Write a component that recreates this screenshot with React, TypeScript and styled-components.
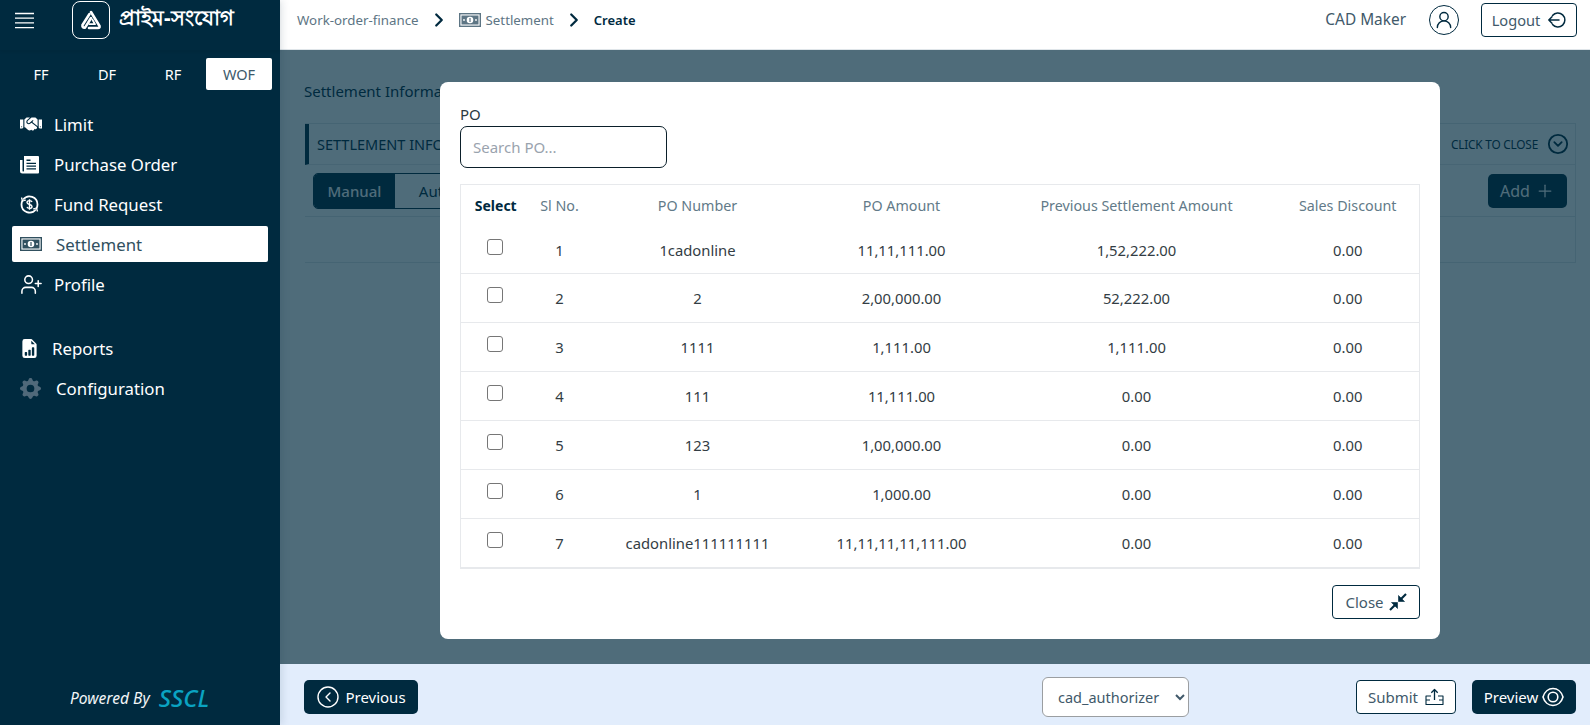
import React from "react";
import styled, { createGlobalStyle } from "styled-components";
import { ChevronRight, Plus, UserRound, UserPlus, CircleChevronLeft, CircleChevronDown } from "lucide-react";
import { BsFileEarmarkBarGraphFill, BsGearFill } from "react-icons/bs";
import { FaHandshake } from "react-icons/fa";

const NAVY = "#002a3f";
const FONT = `"Noto Sans", "Open Sans", "Noto Sans CJK SC", sans-serif`;

const Global = createGlobalStyle`
  html, body { margin: 0; padding: 0; height: 100%; overflow: hidden; }
  body { font-family: ${FONT}; color: ${NAVY}; background: #fff; }
  * { box-sizing: border-box; }
`;

const Shell = styled.div`
  display: grid;
  grid-template-columns: 280px 1fr;
  height: 725px;
  width: 1590px;
`;

/* ---------- sidebar ---------- */
const Sidebar = styled.aside`
  background: ${NAVY};
  color: #fff;
  display: flex;
  flex-direction: column;
  box-shadow: 2px 0 8px rgba(0, 42, 63, 0.12);
  position: relative;
  z-index: 3;
`;
const Brand = styled.div`
  height: 50px;
  display: flex;
  align-items: center;
  padding: 0 0 10px 15px;
  box-shadow: 0 2px 3px rgba(0, 0, 0, 0.06);
`;
const Burger = styled.svg`
  width: 19px;
  height: 17px;
  margin-right: 38px;
  flex: none;
`;
const LogoBox = styled.div`
  width: 38px;
  height: 38px;
  border: 1.5px solid #fff;
  border-radius: 8px;
  display: flex;
  align-items: center;
  justify-content: center;
  margin-right: 9px;
`;
const BrandName = styled.div`
  font-size: 20.6px;
  font-weight: 700;
  white-space: nowrap;
  letter-spacing: 0;
`;
const ProductTabs = styled.div`
  display: grid;
  grid-template-columns: repeat(4, 66px);
  margin: 8px 0 0 8px;
`;
const ProductTab = styled.div<{ $active?: boolean }>`
  height: 32px;
  display: flex;
  align-items: center;
  justify-content: center;
  font-size: 14.5px;
  border-radius: 2px;
  background: ${(p) => (p.$active ? "#fff" : "transparent")};
  color: ${(p) => (p.$active ? "#3d5a6b" : "#fff")};
`;
const Menu = styled.nav`
  display: flex;
  flex-direction: column;
  margin-top: 16px;
`;
const MenuItem = styled.div<{ $active?: boolean; $gap?: number }>`
  height: 36px;
  margin: 0 12px 4px;
  padding: 0 0 0 8px;
  display: flex;
  align-items: center;
  font-size: 16.8px;
  border-radius: 2px;
  background: ${(p) => (p.$active ? "#fff" : "transparent")};
  color: ${(p) => (p.$active ? "#31505f" : "#fff")};
  margin-top: ${(p) => p.$gap ?? 0}px;
`;
const MenuIcon = styled.span<{ $w?: number; $tint?: string }>`
  width: ${(p) => p.$w ?? 34}px;
  flex: none;
  display: flex;
  align-items: center;
  color: ${(p) => p.$tint ?? "inherit"};
`;
const Powered = styled.div`
  margin-top: auto;
  height: 61px;
  display: flex;
  align-items: center;
  padding: 6px 0 0 70px;
  gap: 9px;
  font-style: italic;
`;
const PoweredText = styled.span`
  font-size: 15.6px;
  color: #f2f5f7;
`;
const PoweredBrand = styled.span`
  font-size: 24px;
  font-weight: 500;
  color: #0aa3c2;
`;

/* ---------- main ---------- */
const Main = styled.main`
  display: flex;
  flex-direction: column;
  min-width: 0;
`;
const Header = styled.header`
  height: 50px;
  flex: none;
  display: flex;
  align-items: center;
  padding: 0 13px 10px 17px;
  background: #fff;
  border-bottom: 1px solid #dfe5e9;
`;
const Crumb = styled.span<{ $strong?: boolean }>`
  font-size: ${(p) => (p.$strong ? 13 : 13.3)}px;
  color: ${(p) => (p.$strong ? NAVY : "#5d7584")};
  font-weight: ${(p) => (p.$strong ? 600 : 400)};
`;
const Chevron = styled(ChevronRight)`
  width: 22px;
  height: 22px;
  color: ${NAVY};
  stroke-width: 2.5;
  margin: 0 9px 0 9px;
  flex: none;
`;
const CrumbBill = styled.span`
  display: flex;
  margin-right: 5px;
  color: #5d7584;
`;
const UserName = styled.span`
  margin-left: auto;
  font-size: 15.4px;
  color: #41596a;
`;
const Avatar = styled.span`
  width: 30px;
  height: 30px;
  border: 1.5px solid ${NAVY};
  border-radius: 50%;
  display: flex;
  align-items: center;
  justify-content: center;
  margin: 0 22px 0 23px;
`;
const OutlineButton = styled.button`
  height: 34px;
  display: inline-flex;
  align-items: center;
  justify-content: center;
  gap: 7px;
  background: #fff;
  color: #41596a;
  border: 1px solid ${NAVY};
  border-radius: 4px;
  font-family: ${FONT};
  font-size: 15px;
  padding: 0;
`;
const LogoutButton = styled(OutlineButton)`
  width: 96px;
  font-size: 14.6px;
`;
const CloseButton = styled(OutlineButton)`
  width: 88px;
  gap: 5px;
`;
const SubmitButton = styled(OutlineButton)`
  width: 100px;
  margin-right: 16px;
`;
const SolidButton = styled.button`
  height: 34px;
  display: inline-flex;
  align-items: center;
  justify-content: center;
  background: ${NAVY};
  color: #fff;
  border: 0;
  border-radius: 5px;
  font-family: ${FONT};
  font-size: 15px;
  padding: 0;
`;
const PreviousButton = styled(SolidButton)`
  width: 114px;
  gap: 5px;
`;
const PreviewButton = styled(SolidButton)`
  width: 104px;
  gap: 4px;
`;

const Content = styled.section`
  flex: 1;
  position: relative;
  background: #fff;
  padding: 30px 14px 0 24px;
  min-height: 0;
  overflow: hidden;
`;
const PageTitle = styled.div`
  font-size: 15px;
  line-height: 22px;
  color: ${NAVY};
  margin-bottom: 21px;
`;
const Card = styled.div`
  margin-left: 1px;
  border: 1px solid #dfe4e8;
  border-left: 0;
  height: 140px;
  display: flex;
  flex-direction: column;
`;
const CardHeader = styled.div`
  height: 41px;
  border-left: 4px solid ${NAVY};
  border-bottom: 1px solid #e4e8eb;
  display: flex;
  align-items: center;
  justify-content: space-between;
  padding: 0 6px 0 8px;
  font-size: 14.5px;
  color: ${NAVY};
  flex: none;
`;
const CardToggle = styled.div`
  display: flex;
  align-items: center;
  gap: 9px;
  font-size: 11.8px;
  letter-spacing: -0.2px;
`;
const CardBar = styled.div`
  height: 52px;
  flex: none;
  display: flex;
  align-items: center;
  justify-content: space-between;
  padding: 0 8px;
  border-bottom: 1px solid #dfe4e8;
`;
const Segments = styled.div`
  display: flex;
  height: 36px;
  width: 180px;
  border: 1px solid ${NAVY};
  border-radius: 5px;
  overflow: hidden;
`;
const Segment = styled.div<{ $on?: boolean }>`
  width: 81px;
  display: flex;
  align-items: center;
  justify-content: center;
  font-size: 15px;
  font-weight: ${(p) => (p.$on ? 500 : 400)};
  background: ${(p) => (p.$on ? NAVY : "transparent")};
  color: ${(p) => (p.$on ? "#fff" : NAVY)};
`;
const AddButton = styled(SolidButton)`
  width: 79px;
  gap: 5px;
  font-size: 16px;
`;

const Backdrop = styled.div`
  position: absolute;
  inset: 0;
  background: rgba(0, 42, 63, 0.69);
  display: flex;
  justify-content: center;
  padding: 32px 0 0 10px;
`;
const Modal = styled.div`
  width: 1000px;
  height: 557px;
  background: #fff;
  border-radius: 8px;
  padding: 21px 20px 20px;
  display: flex;
  flex-direction: column;
`;
const FieldLabel = styled.label`
  display: block;
  font-size: 15px;
  line-height: 23px;
  color: #2b3a42;
`;
const SearchInput = styled.input`
  width: 207px;
  height: 42px;
  border: 1px solid #0b1f2a;
  border-radius: 7px;
  padding: 0 12px;
  font-family: ${FONT};
  font-size: 15px;
  outline: none;
  margin-bottom: 16px;
  flex: none;
  &::placeholder { color: #9aa3ae; }
`;
const Table = styled.table`
  width: 959px;
  table-layout: fixed;
  border-collapse: collapse;
  border: 1px solid #e7e9ec;
  border-bottom-width: 2px;
`;
const Col = styled.col<{ $w: number }>`
  width: ${(p) => p.$w}px;
`;
const Th = styled.th<{ $strong?: boolean }>`
  height: 43px;
  padding: 0 0 2px;
  font-size: ${(p) => (p.$strong ? 14 : 14.3)}px;
  text-align: center;
  font-weight: ${(p) => (p.$strong ? 700 : 400)};
  color: ${(p) => (p.$strong ? NAVY : "#627a88")};
  vertical-align: middle;
`;
const Tr = styled.tr`
  height: 49px;
  border-bottom: 1px solid #e7e9ec;
  &:first-child { height: 46px; }
  &:last-child { border-bottom: 0; }
`;
const Td = styled.td`
  padding: 0;
  text-align: center;
  font-size: 14.8px;
  color: #333d44;
`;
const Check = styled.input`
  appearance: none;
  width: 16px;
  height: 16px;
  border: 1px solid #767676;
  border-radius: 3px;
  background: #fff;
  margin: 0 0 6px 26px;
  display: block;
`;
const ModalFoot = styled.div`
  display: flex;
  justify-content: flex-end;
  margin-top: 16px;
`;

const Footer = styled.footer`
  height: 61px;
  flex: none;
  background: #e2edfc;
  display: flex;
  align-items: center;
  padding: 4px 14px 0 24px;
  position: relative;
  z-index: 2;
`;
const AssignSelect = styled.select`
  width: 147px;
  height: 40px;
  margin-left: auto;
  margin-right: 167px;
  background: #fff;
  border: 1px solid #9b9ea1;
  border-radius: 6px;
  padding: 0 8px 0 11px;
  color: #41596a;
  font-family: ${FONT};
  font-size: 14.5px;
`;

/* ---------- drawn icons ---------- */
const BurgerIcon = () => (
  <Burger viewBox="0 0 19 17" fill="none" stroke="#fff" strokeWidth="1.3">
    <path d="M0 1.5h19M0 6.2h19M0 10.9h19M0 15.6h19" />
  </Burger>
);
const LogoMark = () => (
  <svg width="22" height="20" viewBox="0 0 22 20" fill="none" stroke="#fff" strokeLinejoin="round" strokeLinecap="round">
    <path d="M11 2 L19.5 16 Q20 18 18 18 H9" strokeWidth="2.6" />
    <path d="M9.5 4 L2.5 15 Q2 18 5 17.6 L8 13 L11 8" strokeWidth="2.6" />
    <path d="M9.5 14.2 H15 L12.3 9.5" strokeWidth="1.8" />
  </svg>
);
const PoIcon = () => (
  <svg width="19" height="19" viewBox="0 0 19 19">
    <path d="M4 1h14a1 1 0 0 1 1 1v15.500a1 1 0 0 1-1 1H2.500A2.500 2.500 0 0 1 0 16V5h2.500v11a.8.8 0 0 0 1.500 0z" fill="#fff" />
    <path d="M6.500 4.500h4v1.500h-4zM6.500 7.700h9.500v1.300H6.500zM6.500 10.500h9.500v1.300H6.500zM6.500 13.300h9.500v1.300H6.500z" fill={NAVY} />
  </svg>
);
const FundIcon = () => (
  <svg width="19" height="19" viewBox="0 0 19 19" fill="none" stroke="#fff">
    <path d="M3.200 4.500A8 8 0 0 1 17.500 9.500a8 8 0 0 1-1.200 4.200M15.800 14.500A8 8 0 0 1 1.500 9.500a8 8 0 0 1 1.200-4.200" strokeWidth="1.800" />
    <path d="M1.500 2.500l1 3.500 3.500-1M17.500 16.500l-1-3.500-3.500 1" strokeWidth="1.300" />
    <path d="M12 7c-.3-1-1.300-1.400-2.500-1.400-1.500 0-2.500.8-2.500 1.900 0 2.600 5 1.300 5 4 0 1.100-1 1.900-2.500 1.900-1.200 0-2.200-.5-2.500-1.500M9.500 4.300v10.400" strokeWidth="1.400" />
  </svg>
);
const BillIcon = ({ w = 22, h = 14 }: { w?: number; h?: number }) => (
  <svg width={w} height={h} viewBox="0 0 22 14" fill="none" stroke="currentColor">
    <rect x="0.700" y="0.700" width="20.600" height="12.600" strokeWidth="1.400" />
    <rect x="2.500" y="2.500" width="17" height="9" fill="currentColor" stroke="none" />
    <circle cx="11" cy="7" r="3.300" fill="#fff" stroke="none" />
    <path d="M11 5v4" strokeWidth="1.200" />
    <circle cx="5" cy="7" r="0.900" fill="#fff" stroke="none" />
    <circle cx="17" cy="7" r="0.900" fill="#fff" stroke="none" />
  </svg>
);
const LogoutIcon = () => (
  <svg width="19" height="18" viewBox="0 0 19 18" fill="none" stroke={NAVY} strokeWidth="1.500" strokeLinecap="round" strokeLinejoin="round">
    <path d="M5.500 4.500A7 7 0 1 1 5.500 13.500" />
    <path d="M12 9H1.800M5 5.800 1.800 9 5 12.200" />
  </svg>
);
const UploadIcon = () => (
  <svg width="19" height="18" viewBox="0 0 19 18" fill="none" stroke={NAVY} strokeWidth="1.100" strokeLinejoin="round">
    <path d="M6 8H1v8.500h17V8h-5M1 12h4M14 12h4" />
    <path d="M9.500 12V1.500M6.300 4.700 9.500 1.500l3.200 3.200" strokeWidth="1.300" />
  </svg>
);
const EyeRings = () => (
  <svg width="22" height="20" viewBox="0 0 22 20" fill="none" stroke="#fff">
    <path d="M1 10C2.500 4.800 6.500 1.500 11 1.500S19.500 4.800 21 10c-1.500 5.200-5.500 8.500-10 8.500S2.500 15.200 1 10z" strokeWidth="1.600" />
    <circle cx="11" cy="10" r="4.800" strokeWidth="1.600" />
  </svg>
);
const ContractIcon = () => (
  <svg width="18" height="18" viewBox="0 0 18 18" fill={NAVY} stroke={NAVY} strokeWidth="0.600" strokeLinejoin="round">
    <path d="M17 1 12 6" strokeWidth="2.200" />
    <path d="M9.500 8.500V2.500L15.500 8.500z" />
    <path d="M1 17 6 12" strokeWidth="2.200" />
    <path d="M8.500 9.500V15.500L2.500 9.500z" />
  </svg>
);

const products = [{ n: "FF" }, { n: "DF" }, { n: "RF" }, { n: "WOF", on: true }];
const columns = [
  { t: "Select", w: 70, strong: true },
  { t: "Sl No.", w: 58 },
  { t: "PO Number", w: 218 },
  { t: "PO Amount", w: 190 },
  { t: "Previous Settlement Amount", w: 280 },
  { t: "Sales Discount", w: 143 },
];
const rows = [
  ["1", "1cadonline", "11,11,111.00", "1,52,222.00", "0.00"],
  ["2", "2", "2,00,000.00", "52,222.00", "0.00"],
  ["3", "1111", "1,111.00", "1,111.00", "0.00"],
  ["4", "111", "11,111.00", "0.00", "0.00"],
  ["5", "123", "1,00,000.00", "0.00", "0.00"],
  ["6", "1", "1,000.00", "0.00", "0.00"],
  ["7", "cadonline111111111", "11,11,11,11,111.00", "0.00", "0.00"],
];

export default function App() {
  return (
    <>
      <Global />
      <Shell>
        <Sidebar>
          <Brand>
            <BurgerIcon />
            <LogoBox><LogoMark /></LogoBox>
            <BrandName>প্রাইম-সংযোগ</BrandName>
          </Brand>
          <ProductTabs>
            {products.map((p) => (
              <ProductTab key={p.n} $active={p.on}>{p.n}</ProductTab>
            ))}
          </ProductTabs>
          <Menu>
            <MenuItem><MenuIcon><FaHandshake size={22} /></MenuIcon>Limit</MenuItem>
            <MenuItem><MenuIcon><PoIcon /></MenuIcon>Purchase Order</MenuItem>
            <MenuItem><MenuIcon><FundIcon /></MenuIcon>Fund Request</MenuItem>
            <MenuItem $active><MenuIcon $w={36} $tint="#31505f"><BillIcon /></MenuIcon>Settlement</MenuItem>
            <MenuItem><MenuIcon><UserPlus size={23} strokeWidth={1.6} /></MenuIcon>Profile</MenuItem>
            <MenuItem $gap={24}><MenuIcon $w={32}><BsFileEarmarkBarGraphFill size={19} /></MenuIcon>Reports</MenuItem>
            <MenuItem><MenuIcon $w={36} $tint="#50697a"><BsGearFill size={21} /></MenuIcon>Configuration</MenuItem>
          </Menu>
          <Powered>
            <PoweredText>Powered By</PoweredText>
            <PoweredBrand>SSCL</PoweredBrand>
          </Powered>
        </Sidebar>
        <Main>
          <Header>
            <Crumb>Work-order-finance</Crumb>
            <Chevron />
            <CrumbBill><BillIcon /></CrumbBill>
            <Crumb>Settlement</Crumb>
            <Chevron />
            <Crumb $strong>Create</Crumb>
            <UserName>CAD Maker</UserName>
            <Avatar><UserRound size={20} strokeWidth={1.7} /></Avatar>
            <LogoutButton>Logout <LogoutIcon /></LogoutButton>
          </Header>
          <Content>
            <PageTitle>Settlement Information</PageTitle>
            <Card>
              <CardHeader>
                <span>SETTLEMENT INFORMATION</span>
                <CardToggle>CLICK TO CLOSE <CircleChevronDown size={22} strokeWidth={2} /></CardToggle>
              </CardHeader>
              <CardBar>
                <Segments>
                  <Segment $on>Manual</Segment>
                  <Segment>Auto</Segment>
                </Segments>
                <AddButton>Add <Plus size={20} strokeWidth={1.5} /></AddButton>
              </CardBar>
            </Card>
            <Backdrop>
              <Modal>
                <FieldLabel htmlFor="po-search">PO</FieldLabel>
                <SearchInput id="po-search" placeholder="Search PO..." />
                <Table>
                  <colgroup>
                    {columns.map((c) => <Col key={c.t} $w={c.w} />)}
                  </colgroup>
                  <thead>
                    <tr>
                      {columns.map((c) => <Th key={c.t} $strong={c.strong}>{c.t}</Th>)}
                    </tr>
                  </thead>
                  <tbody>
                    {rows.map((r) => (
                      <Tr key={r[0]}>
                        <Td><Check type="checkbox" /></Td>
                        {r.map((v, i) => <Td key={i}>{v}</Td>)}
                      </Tr>
                    ))}
                  </tbody>
                </Table>
                <ModalFoot>
                  <CloseButton>Close <ContractIcon /></CloseButton>
                </ModalFoot>
              </Modal>
            </Backdrop>
          </Content>
          <Footer>
            <PreviousButton><CircleChevronLeft size={24} strokeWidth={1.4} /> Previous</PreviousButton>
            <AssignSelect defaultValue="cad_authorizer">
              <option>cad_authorizer</option>
            </AssignSelect>
            <SubmitButton>Submit <UploadIcon /></SubmitButton>
            <PreviewButton>Preview <EyeRings /></PreviewButton>
          </Footer>
        </Main>
      </Shell>
    </>
  );
}
